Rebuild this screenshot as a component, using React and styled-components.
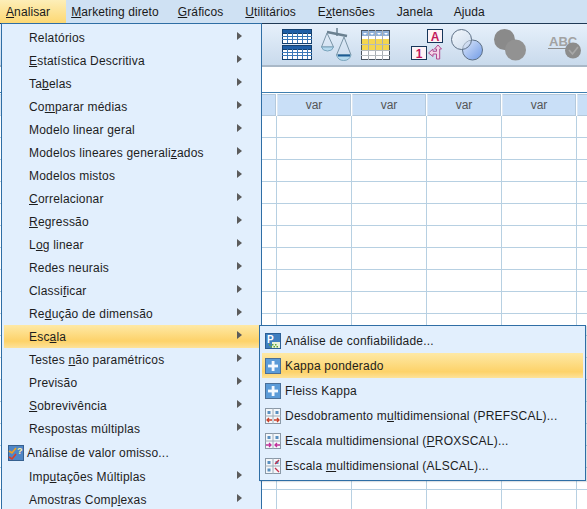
import React from "react";
import styled, { createGlobalStyle } from "styled-components";

const Global = createGlobalStyle`
  html, body { margin: 0; padding: 0; background: #fff; }
  body { font-family: "Liberation Sans", Arial, sans-serif; }
  u { text-underline-offset: 1px; text-decoration-thickness: 1px; }
`;

const Page = styled.div`
  position: relative;
  width: 587px;
  height: 509px;
  overflow: hidden;
  background: #fff;
  display: flex;
  flex-direction: column;
`;

const MenuBar = styled.nav`
  display: flex;
  height: 23px;
  background: #cfe1f3;
  flex: none;
`;

const MenuBarItem = styled.div`
  display: flex;
  align-items: center;
  height: 23px;
  padding: 0 ${p => p.$right}px 0 ${p => p.$left}px;
  font-size: 12px;
  letter-spacing: 0.1px;
  color: #1a1a1a;
  background: ${p => (p.$active ? "linear-gradient(#fdeeb8, #fdd873)" : "transparent")};
`;

const Toolbar = styled.div`
  flex: none;
  height: 41px;
  border-top: 1px solid #1f3a56;
  border-bottom: 2px solid #a9b8c7;
  background: linear-gradient(#e6f0fb, #c9daec);
  display: flex;
  align-items: center;
  padding-left: 282px;
`;

const ToolIcon = styled.svg`
  flex: none;
  display: block;
  margin-right: ${p => p.$gap}px;
`;

const EntryBar = styled.div`
  flex: none;
  height: 24px;
  margin-top: 1px;
  background: #fff;
  border-bottom: 1px solid #3f7fb0;
`;

const Sheet = styled.div`
  flex: 1;
  display: grid;
  margin-top: 1px;
  grid-template-columns: 277px repeat(5, 75px);
  grid-auto-rows: 22px;
`;

const HeaderCell = styled.div`
  box-sizing: border-box;
  height: 22px;
  margin-right: 1px;
  border: 1px solid #b4c9dc;
  border-left-color: #dce8f4;
  background: #c9dff7;
  display: flex;
  align-items: center;
  justify-content: center;
  font-size: 12px;
  color: #555;
`;

const Cell = styled.div`
  box-sizing: border-box;
  border-right: 1px solid #b7d0e2;
  border-bottom: 1px solid #b7d0e2;
`;

const Menu = styled.div`
  position: absolute;
  left: 1px;
  top: 23px;
  width: 261px;
  height: 500px;
  box-sizing: border-box;
  border: 1px solid #2f6ea5;
  padding: 2px 2px;
  background: #e2effd;
  display: flex;
  flex-direction: column;
`;

const MenuRow = styled.div`
  flex: none;
  height: ${p => (p.$icon ? 25 : 23)}px;
  display: flex;
  align-items: center;
  gap: 3px;
  padding: 0 0 0 ${p => (p.$icon ? 4 : 25)}px;
  position: relative;
  font-size: 12px;
  letter-spacing: 0.2px;
  color: #1d1d1d;
  white-space: nowrap;
  background: ${p => (p.$active ? "linear-gradient(#fee9a6, #fdd269 70%, #fde29a)" : "transparent")};
`;

const Arrow = styled.span`
  position: absolute;
  left: 233px;
  top: 6px;
  width: 0;
  height: 0;
  border-left: 5px solid #5b5b5b;
  border-top: 4.5px solid transparent;
  border-bottom: 4.5px solid transparent;
`;

const SubMenu = styled.div`
  position: absolute;
  left: 259px;
  top: 325px;
  width: 327px;
  height: 156px;
  box-sizing: border-box;
  border: 1px solid #2f6ea5;
  padding: 2px 2px;
  background: #e2effd;
  display: flex;
  flex-direction: column;
  box-shadow: 1px 1px 1px rgba(80, 100, 120, 0.2);
`;

const SubRow = styled.div`
  flex: none;
  height: 25px;
  display: flex;
  align-items: center;
  gap: 4px;
  padding-left: 3px;
  font-size: 12px;
  letter-spacing: 0.22px;
  color: #1d1d1d;
  white-space: nowrap;
  background: ${p => (p.$active ? "linear-gradient(#fee9a6, #fdd269 75%, #fde29a)" : "transparent")};
`;

const SmallIcon = styled.svg`
  flex: none;
  display: block;
  width: 16px;
  height: 16px;
`;

const GridTables = () => {
  const block = y => (
    <g>
      <rect x="0.5" y={y + 0.5} width="29" height="14" fill="#fff" stroke="#13406f" />
      <rect x="0.5" y={y + 0.5} width="29" height="4" fill="#1f5fa6" stroke="#13406f" />
      {[5, 10, 15, 20, 25].map(x => (
        <line key={x} x1={x + 0.5} x2={x + 0.5} y1={y + 4} y2={y + 14} stroke="#3a78b8" />
      ))}
      {[7, 10].map(d => (
        <line key={d} x1="0" x2="30" y1={y + d + 0.5} y2={y + d + 0.5} stroke="#3a78b8" />
      ))}
    </g>
  );
  return (
    <ToolIcon $gap={9} width="30" height="31" viewBox="0 0 30 31">
      {block(0)}
      {block(16)}
    </ToolIcon>
  );
};

const Scale = () => (
  <ToolIcon $gap={9} width="31" height="33" viewBox="0 0 31 33">
    <line x1="6" y1="4" x2="26" y2="8" stroke="#6a8090" strokeWidth="2.6" />
    <line x1="16" y1="0" x2="16" y2="8" stroke="#6a8090" strokeWidth="1.5" />
    <path d="M6 5 L0.5 19 H12.5 Z" fill="none" stroke="#7a94a6" />
    <path d="M0.5 19 H12.5 Q11.5 23 6.5 23 Q1.5 23 0.5 19 Z" fill="#b5d9ee" stroke="#7aa4bc" />
    <path d="M23 9 L15.5 27 H30 Z" fill="none" stroke="#7a94a6" />
    <path d="M15.5 27 H30 Q28.5 32.5 22.7 32.5 Q17 32.5 15.5 27 Z" fill="#b5d9ee" stroke="#7aa4bc" />
    <line x1="17" y1="27.5" x2="29" y2="27.5" stroke="#1d5c94" strokeWidth="2" />
  </ToolIcon>
);

const YellowTable = () => (
  <ToolIcon $gap={21} width="29" height="30" viewBox="0 0 29 30">
    <rect x="0.5" y="0.5" width="28" height="29" fill="#fff" stroke="#4a5560" />
    <rect x="1" y="1" width="27" height="5" fill="#8fb0d8" />
    <rect x="1" y="9" width="27" height="11" fill="#f4d64e" />
    {[7.5, 14.5, 21.5].map(x => (
      <line key={x} x1={x} x2={x} y1="0" y2="30" stroke="#a8aeb3" />
    ))}
    {[14.5, 20.5, 25.5].map(y => (
      <line key={y} x1="0" x2="29" y1={y} y2={y} stroke="#b5bbbf" />
    ))}
    {[4, 11, 18, 25].map(x => (
      <path key={x} d={`M${x - 2} 3 H${x + 2} L${x} 5 Z`} fill="#fff" />
    ))}
  </ToolIcon>
);

const LabelValue = () => (
  <ToolIcon $gap={7} width="33" height="31" viewBox="0 0 33 31">
    <rect x="16.5" y="0.5" width="15" height="13" fill="#fdf2f6" stroke="#16365a" />
    <text x="24" y="11.5" textAnchor="middle" fontSize="12" fontWeight="700" fontFamily="Liberation Sans" fill="#c3185c">A</text>
    <rect x="0.5" y="17.5" width="15" height="13" fill="#fdf2f6" stroke="#16365a" />
    <text x="8" y="28.5" textAnchor="middle" fontSize="12" fontWeight="700" fontFamily="Liberation Sans" fill="#c3185c">1</text>
    <path d="M27 16 L30.5 20 H28.7 V30 H25.5 V25 H22 V27.5 L17.5 24 L22 20 V22.3 H25.5 V20 H23.5 Z" fill="#f3d6e8" stroke="#b04a90" strokeWidth="1" />
  </ToolIcon>
);

const Circles = ({ gray }) => (
  <ToolIcon $gap={gray ? 22 : 11} width="32" height="32" viewBox="0 0 32 32">
    <defs>
      <linearGradient id="blueC" x1="0" y1="0" x2="1" y2="1">
        <stop offset="0" stopColor="#dfe9fb" />
        <stop offset="1" stopColor="#6f9ae6" />
      </linearGradient>
      <linearGradient id="paleC" x1="0" y1="0" x2="1" y2="1">
        <stop offset="0" stopColor="#ffffff" />
        <stop offset="1" stopColor="#c8d6e8" />
      </linearGradient>
    </defs>
    {gray ? (
      <g fill="#8a8a8a">
        <circle cx="10.5" cy="10.5" r="10.5" />
        <circle cx="21.5" cy="21" r="10.5" fill="#929292" />
      </g>
    ) : (
      <g stroke="#5c6f85">
        <circle cx="21.5" cy="21" r="10" fill="url(#blueC)" />
        <circle cx="10.5" cy="10.5" r="10" fill="url(#paleC)" fillOpacity="0.55" />
      </g>
    )}
  </ToolIcon>
);

const Spell = () => (
  <ToolIcon $gap={0} width="33" height="28" viewBox="0 0 33 28">
    <text x="1" y="15" fontSize="13" fontWeight="700" fontFamily="Liberation Sans" fill="#a2a2a2">ABC</text>
    <line x1="0" x2="24" y1="17.5" y2="17.5" stroke="#8f8f8f" />
    <circle cx="25" cy="19.5" r="8" fill="#8c8c8c" />
    <path d="M21 19 L24.5 23 L30 16" fill="none" stroke="#a8a8a8" strokeWidth="1.6" />
  </ToolIcon>
);

const ReliabilityIcon = () => (
  <SmallIcon viewBox="0 0 16 16">
    <rect x="0.5" y="0.5" width="15" height="15" fill="#3f7fc0" stroke="#2c5f95" />
    <rect x="7" y="9" width="8" height="6" fill="#e8f2d8" />
    <text x="2" y="9.5" fontSize="10" fontWeight="700" fontFamily="Liberation Sans" fill="#fff">P</text>
    <g fill="#5fa63a">
      <rect x="4" y="11" width="1.5" height="1.5" /><rect x="7" y="11" width="1.5" height="1.5" /><rect x="10" y="11" width="1.5" height="1.5" />
      <rect x="5.5" y="13" width="1.5" height="1.5" /><rect x="8.5" y="13" width="1.5" height="1.5" /><rect x="11.5" y="13" width="1.5" height="1.5" />
    </g>
  </SmallIcon>
);

const PlusIcon = () => (
  <SmallIcon viewBox="0 0 16 16">
    <rect x="0.5" y="0.5" width="15" height="15" fill="#5b9bd8" stroke="#4a6f98" />
    <rect x="6.7" y="3" width="2.8" height="10" fill="#f4f9ff" />
    <rect x="3" y="6.6" width="10" height="2.8" fill="#f4f9ff" />
  </SmallIcon>
);

const ScaleIcon = ({ kind }) => {
  const color = kind === 0 ? "#c8402a" : kind === 1 ? "#c0309a" : "#c8304a";
  return (
    <SmallIcon viewBox="0 0 16 16">
      <rect x="0.5" y="0.5" width="15" height="15" fill="#f4f7fa" stroke="#8a98a6" />
      <line x1="8" x2="8" y1="0" y2="16" stroke="#a0acb8" />
      <line x1="0" x2="16" y1="8" y2="8" stroke="#a0acb8" />
      <rect x="2.5" y="3" width="3" height="3" fill="#5a90c0" />
      <rect x="10.5" y="3" width="3" height="3" fill="#5a90c0" />
      {kind === 2 ? (
        <g>
          <rect x="2.5" y="10.5" width="3" height="3" fill="#5a90c0" />
          <path d="M10 6 L14 2 M10 10 L14 14" stroke={color} strokeWidth="1.3" />
        </g>
      ) : (
        <g stroke={color} strokeWidth="1.3" fill="none">
          <path d={kind === 0 ? "M7 12 H2 M4 10 L2 12 L4 14" : "M1 12 H6 M4 10 L6 12 L4 14"} />
          <path d={kind === 0 ? "M9 12 H14 M12 10 L14 12 L12 14" : "M15 12 H10 M12 10 L10 12 L12 14"} />
        </g>
      )}
    </SmallIcon>
  );
};

const MissingIcon = () => (
  <SmallIcon viewBox="0 0 16 16">
    <rect x="0.5" y="0.5" width="15" height="15" fill="#4f86c6" stroke="#36608f" />
    <path d="M1 6 L4 8 L8 3" fill="none" stroke="#f0a020" strokeWidth="1.6" />
    <path d="M1 12 L4 14 L8 9" fill="none" stroke="#d8402a" strokeWidth="1.6" />
    <text x="9" y="9" fontSize="9" fontWeight="700" fontFamily="Liberation Sans" fill="#fff2a0">?</text>
  </SmallIcon>
);

const topItems = [
  { label: <span><u>A</u>nalisar</span>, left: 6, right: 16, active: true },
  { label: <span><u>M</u>arketing direto</span>, left: 5, right: 14 },
  { label: <span><u>G</u>ráficos</span>, left: 5, right: 17 },
  { label: <span><u>U</u>tilitários</span>, left: 5, right: 17 },
  { label: <span>E<u>x</u>tensões</span>, left: 5, right: 17 },
  { label: <span>Janela</span>, left: 5, right: 16 },
  { label: <span>Ajuda</span>, left: 5, right: 15 },
];

const menuItems = [
  { label: <>Relatórios</> },
  { label: <><u>E</u>statística Descritiva</> },
  { label: <>Ta<u>b</u>elas</> },
  { label: <>Co<u>m</u>parar médias</> },
  { label: <>Modelo linear <u>g</u>eral</> },
  { label: <>Modelos lineares generali<u>z</u>ados</> },
  { label: <>Modelos mistos</> },
  { label: <><u>C</u>orrelacionar</> },
  { label: <><u>R</u>egressão</> },
  { label: <>L<u>o</u>g linear</> },
  { label: <>Redes neurais</> },
  { label: <>Classi<u>f</u>icar</> },
  { label: <>Re<u>d</u>ução de dimensão</> },
  { label: <>Esc<u>a</u>la</>, active: true },
  { label: <>Testes <u>n</u>ão paramétricos</> },
  { label: <>Previsão</> },
  { label: <><u>S</u>obrevivência</> },
  { label: <>Respostas múltiplas</> },
  { label: <>Análise de valor omisso...</>, icon: true },
  { label: <>Imp<u>u</u>tações Múltiplas</> },
  { label: <>Amostras Comp<u>l</u>exas</> },
];

const subItems = [
  { icon: <ReliabilityIcon />, label: <>Análise de confiabilidade...</> },
  { icon: <PlusIcon />, label: <>Kappa ponderado</>, active: true },
  { icon: <PlusIcon />, label: <>Fleiss Kappa</> },
  { icon: <ScaleIcon kind={0} />, label: <>Desdobramento m<u>u</u>ltidimensional (PREFSCAL)...</> },
  { icon: <ScaleIcon kind={1} />, label: <>Escala multidimensional (<u>P</u>ROXSCAL)...</> },
  { icon: <ScaleIcon kind={2} />, label: <>Escala <u>m</u>ultidimensional (ALSCAL)...</> },
];

const columns = 6;
const rows = 18;

export default function App() {
  return (
    <Page>
      <Global />
      <MenuBar>
        {topItems.map((item, i) => (
          <MenuBarItem key={i} $left={item.left} $right={item.right} $active={item.active}>
            {item.label}
          </MenuBarItem>
        ))}
      </MenuBar>
      <Toolbar>
        <GridTables />
        <Scale />
        <YellowTable />
        <LabelValue />
        <Circles />
        <Circles gray />
        <Spell />
      </Toolbar>
      <EntryBar />
      <Sheet>
        {Array.from({ length: columns }).map((_, i) => (
          <HeaderCell key={i}>{i > 0 && i < 5 ? "var" : ""}</HeaderCell>
        ))}
        {Array.from({ length: rows * columns }).map((_, i) => (
          <Cell key={i} />
        ))}
      </Sheet>
      <Menu>
        {menuItems.map((item, i) => (
          <MenuRow key={i} $active={item.active} $icon={item.icon}>
            {item.icon && <MissingIcon />}
            <span>{item.label}</span>
            {!item.icon && <Arrow />}
          </MenuRow>
        ))}
      </Menu>
      <SubMenu>
        {subItems.map((item, i) => (
          <SubRow key={i} $active={item.active}>
            {item.icon}
            <span>{item.label}</span>
          </SubRow>
        ))}
      </SubMenu>
    </Page>
  );
}
